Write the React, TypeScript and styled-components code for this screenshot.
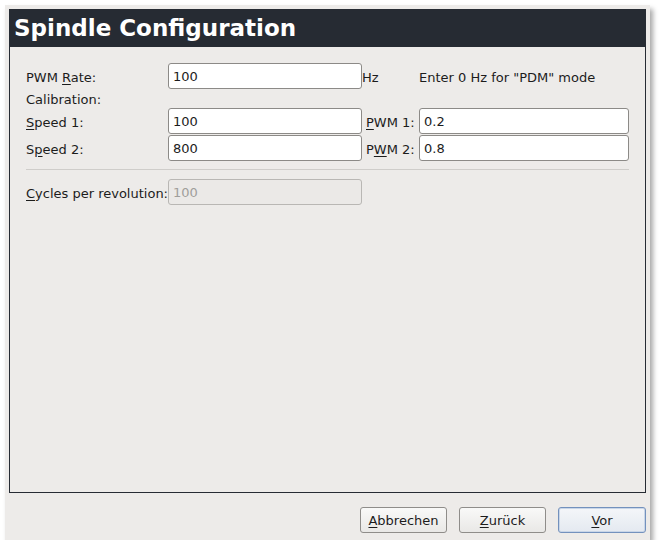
import React from "react";
import styled, { createGlobalStyle } from "styled-components";

const Global = createGlobalStyle`
  html, body { margin: 0; padding: 0; background: #ffffff; }
  body { font-family: "DejaVu Sans", "Liberation Sans", sans-serif; font-size: 13px; color: #1c1c1c; }
`;

const Window = styled.div`
  margin: 5px 0 0 5px;
  width: 645px;
  height: 535px;
  background: #edebe9;
  box-shadow: 3px 4px 5px rgba(0, 0, 0, 0.35);
  box-sizing: border-box;
  padding: 4px 4px 0 4px;
  display: flex;
  flex-direction: column;
`;

const Panel = styled.div`
  height: 484px;
  box-sizing: border-box;
  border: 1px solid #262b33;
  border-top: none;
  display: flex;
  flex-direction: column;
`;

const Header = styled.div`
  height: 38px;
  background: #262b33;
  color: #ffffff;
  font-weight: bold;
  font-size: 23px;
  line-height: 38px;
  padding-left: 5px;
  margin: 0 -1px;
`;

const Form = styled.div`
  padding: 16px 15px 0 16px;
  display: grid;
  grid-template-columns: 142px 194px 57px 210px;
  grid-auto-rows: auto;
  align-items: center;
`;

const Label = styled.div<{ $span?: number }>`
  grid-column: span ${(p) => p.$span ?? 1};
  white-space: nowrap;
  height: 18px;
  line-height: 19px;
`;

const SideLabel = styled(Label)`
  padding-left: 4px;
`;

const Input = styled.div<{ $disabled?: boolean }>`
  height: 26px;
  box-sizing: border-box;
  border: 1px solid ${(p) => (p.$disabled ? "#b9b7b4" : "#8c8a87")};
  border-radius: 3px;
  background: ${(p) => (p.$disabled ? "#ebe9e7" : "#ffffff")};
  color: ${(p) => (p.$disabled ? "#a09e9b" : "#1c1c1c")};
  padding-left: 4px;
  line-height: 25px;
  margin-bottom: 1px;
`;

const Separator = styled.div`
  grid-column: 1 / span 4;
  height: 1px;
  background: #cfcdca;
  margin: 7px 0 9px;
`;

const Mn = styled.span`
  text-decoration: underline;
  text-underline-offset: 2px;
`;

const Spacer = styled.div``;

const ButtonBar = styled.div`
  flex: 1;
  display: flex;
  justify-content: flex-end;
  align-items: flex-start;
  gap: 12px;
  padding: 14px 0 0 0;
`;

const Button = styled.button<{ $primary?: boolean }>`
  font-family: "DejaVu Sans", "Liberation Sans", sans-serif;
  font-size: 13px;
  color: #1c1c1c;
  height: 26px;
  width: ${(p) => (p.$primary ? "88px" : "87px")};
  border-radius: 3px;
  border: 1px solid ${(p) => (p.$primary ? "#7391bd" : "#8f8d8a")};
  background: ${(p) =>
    p.$primary
      ? "linear-gradient(#f4f6f9, #e4e9f0)"
      : "linear-gradient(#f9f9f8, #e9e8e6)"};
  padding: 0;
  box-shadow: ${(p) => (p.$primary ? "inset 0 0 0 1px #c9d6e8" : "none")};
`;

export default function App() {
  return (
    <>
      <Global />
      <Window>
        <Panel>
          <Header>Spindle Configuration</Header>
          <Form>
            <Label>
              PWM <Mn>R</Mn>ate:
            </Label>
            <Input>100</Input>
            <Label>Hz</Label>
            <Label>Enter 0 Hz for "PDM" mode</Label>

            <Label $span={4}>Calibration:</Label>

            <Label>
              <Mn>S</Mn>peed 1:
            </Label>
            <Input>100</Input>
            <SideLabel>
              <Mn>P</Mn>WM 1:
            </SideLabel>
            <Input>0.2</Input>

            <Label>
              S<Mn>p</Mn>eed 2:
            </Label>
            <Input>800</Input>
            <SideLabel>
              P<Mn>W</Mn>M 2:
            </SideLabel>
            <Input>0.8</Input>

            <Separator />

            <Label>
              <Mn>C</Mn>ycles per revolution:
            </Label>
            <Input $disabled>100</Input>
            <Spacer />
            <Spacer />
          </Form>
        </Panel>
        <ButtonBar>
          <Button>
            <Mn>A</Mn>bbrechen
          </Button>
          <Button>
            <Mn>Z</Mn>urück
          </Button>
          <Button $primary>
            <Mn>V</Mn>or
          </Button>
        </ButtonBar>
      </Window>
    </>
  );
}
